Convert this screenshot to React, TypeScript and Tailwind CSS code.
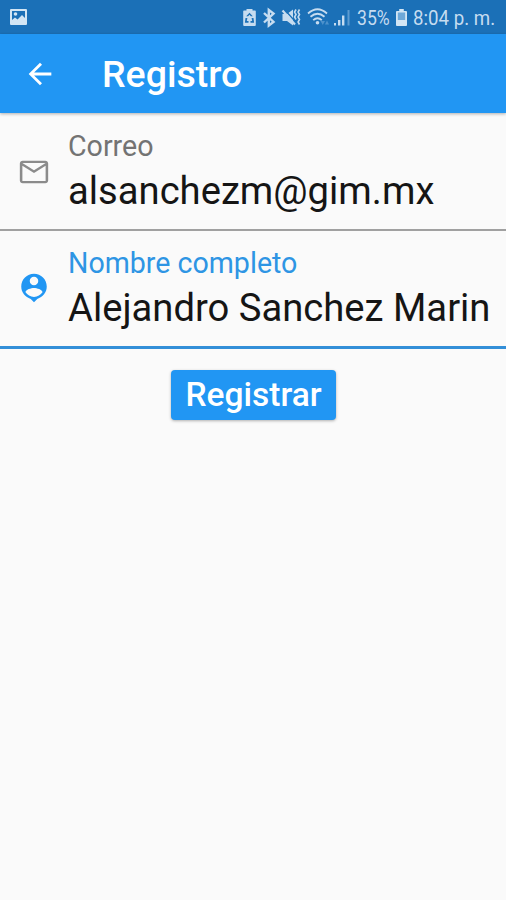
import type { ReactNode } from 'react';

function StatusIcons() {
  return (
    <svg width="110" height="34" viewBox="242 0 110 34" fill="#c6dcf0" className="shrink-0">
      {/* battery saver */}
      <path fillRule="evenodd" d="M246.500 9h6v1.500h2.500q.8 0 .8.800V25q0 1-1 1h-10.600q-1 0-1-1V11.300q0-.8.8-.8h2.500zM249.500 12.700l-3.300 3.600h1.900l1.400-1.500 1.400 1.500h1.900zM245.500 18l-.6 4.700h3.600v-1.700h-1.700l.6-3zM253.500 18l.6 4.700h-3.600v-1.700h1.700l-.6-3z" />
      {/* bluetooth */}
      <path d="M264 13l9.500 9-4.700 3.500V10l4.700 3.500-9.500 9" fill="none" stroke="#c6dcf0" strokeWidth="2.400" />
      {/* muted speaker with vibration */}
      <path d="M282.500 14h4.500l6-4.500v16L287 21h-4.500z" />
      <path d="M284.500 9.500l12 13.500" stroke="#1b70b7" strokeWidth="1.300" />
      <path d="M282.500 10.500l12.500 14" stroke="#c6dcf0" strokeWidth="2.200" />
      <path d="M296 9.500l-1.400 2.500 1.400 2.500-1.400 2.500 1.400 2.500M299.500 9.500l-1.400 2.500 1.400 2.500-1.400 2.500 1.400 2.500-1.400 2.500 1.400 2.500" fill="none" stroke="#c6dcf0" strokeWidth="1.600" />
      {/* wifi */}
      <g fill="none" stroke="#c6dcf0" strokeWidth="1.800">
        <path d="M308 13.500q9.500-8.500 19 0" />
        <path d="M310.500 16.800q7-6 14 0" />
        <path d="M313.200 20.200q4.300-4 8.600 0" />
      </g>
      <circle cx="317.500" cy="22.800" r="1.800" />
      <path d="M320.500 21h4.500l-2.250 4zM325 24.500l2-4 2 4z" fill="#4d91cb" />
      {/* signal strength */}
      <path d="M334 23h2v2.500h-2zM338 20h2.400v5.500H338zM342 15.500h2.400v10H342z" />
      <path d="M347.500 10h2v15.500h-2z" fill="#5c9bd0" />
    </svg>
  );
}

function StatusBar() {
  return (
    <div className="flex h-[34px] items-center bg-[#1b70b7] text-[20px] leading-[34px] text-[#c6dcf0]">
      <svg width="17" height="16" viewBox="0 0 17 16" className="ml-[10px] shrink-0">
        <path fill="#d2e5f4" fillRule="evenodd" d="M1 0h15q1 0 1 1v14q0 1-1 1H1q-1 0-1-1V1q0-1 1-1zM2 2v9l3-2.500 2.500 2L12 6l3 3V2z" />
        <circle cx="5.500" cy="5" r="1.800" fill="#d2e5f4" />
      </svg>
      <div className="ml-[215px] flex items-center">
        <StatusIcons />
        <div className="ml-[5px] w-[39px] whitespace-nowrap pt-[2px]">
          <span className="inline-block origin-left scale-x-[0.88]">35%</span>
        </div>
        <svg width="11" height="17" viewBox="0 0 12 17" preserveAspectRatio="none" className="mt-[1px] shrink-0">
          <path fill="#d2e5f4" d="M3.500 0h5v2H11q1 0 1 1v13q0 1-1 1H1q-1 0-1-1V3q0-1 1-1h2.500z" />
          <path fill="#6ea8d8" d="M2 3.500h8V11H2z" />
        </svg>
        <div className="ml-[6px] w-[90px] whitespace-nowrap pt-[2px]">
          <span className="inline-block origin-left scale-x-[0.935]">8:04 p. m.</span>
        </div>
      </div>
    </div>
  );
}

function AppBar() {
  return (
    <header className="relative flex h-[79px] items-center bg-[#2196f3] pl-[23px] text-white shadow-[0_1px_3px_rgba(0,0,0,0.3)]">
      <svg width="34" height="34" viewBox="0 0 24 24" fill="currentColor">
        <path d="M20 11H7.830l5.590-5.590L12 4l-8 8 8 8 1.410-1.410L7.830 13H20v-2z" />
      </svg>
      <h1 className="ml-[45px] text-[37.500px] font-medium leading-[44px]">Registro</h1>
    </header>
  );
}

type FieldProps = { label: string; value: string; icon: ReactNode; active?: boolean };

function Field({ label, value, icon, active = false }: FieldProps) {
  return (
    <div className={active ? 'flex h-[118px] border-b-[3px] border-[#338fd8]' : 'flex h-[118px] border-b-2 border-[#a0a0a0]'}>
      <div className={active ? 'w-[68px] shrink-0 pl-[17px] pt-[40px] text-[#2196f3]' : 'w-[68px] shrink-0 pl-[17px] pt-[42px] text-[#8b8b8b]'}>
        {icon}
      </div>
      <div className={active ? 'whitespace-nowrap pt-[15px]' : 'whitespace-nowrap pt-[16px]'}>
        <div className={active ? 'text-[28.600px] leading-[34px] text-[#2e95e4]' : 'text-[28.600px] leading-[34px] text-[#737373]'}>{label}</div>
        <div className="mt-[6px] text-[38.200px] leading-[44px] text-[#151515]">{value}</div>
      </div>
    </div>
  );
}

export default function App() {
  return (
    <div className="flex h-[900px] w-[506px] flex-col overflow-hidden bg-[#fafafa] font-['Roboto',sans-serif]">
      <StatusBar />
      <AppBar />
      <main>
        <Field
          label="Correo"
          value="alsanchezm@gim.mx"
          icon={
            <svg width="34" height="34" viewBox="0 0 24 24" fill="currentColor">
              <path d="M22 6c0-1.100-.9-2-2-2H4c-1.100 0-2 .9-2 2v12c0 1.100.9 2 2 2h16c1.100 0 2-.9 2-2V6zm-1.800-.4l-8.200 5.100-8.200-5.100h16.400zm0 12.700H3.800V7.600l8.200 5.100 8.200-5.100v10.700z" />
            </svg>
          }
        />
        <Field
          active
          label="Nombre completo"
          value="Alejandro Sanchez Marin"
          icon={
            <svg width="34" height="34" viewBox="0 0 24 24" fill="currentColor">
              <path d="M12 2c-4.970 0-9 4.030-9 9 0 4.170 2.840 7.670 6.690 8.690L12 22l2.310-2.310C18.160 18.670 21 15.170 21 11c0-4.970-4.030-9-9-9zm0 2c1.660 0 3 1.340 3 3s-1.340 3-3 3-3-1.340-3-3 1.340-3 3-3zm0 14.300c-2.500 0-4.710-1.280-6-3.220.03-1.990 4-3.080 6-3.080 1.990 0 5.970 1.090 6 3.080-1.290 1.940-3.500 3.220-6 3.220z" />
            </svg>
          }
        />
        <div className="mt-[21px] flex justify-center pl-px">
          <button className="h-[50px] w-[165px] rounded-[4px] bg-[#2196f3] text-[33.500px] font-medium leading-[50px] text-white shadow-[0_1px_3px_rgba(0,0,0,0.3)]">
            Registrar
          </button>
        </div>
      </main>
    </div>
  );
}
